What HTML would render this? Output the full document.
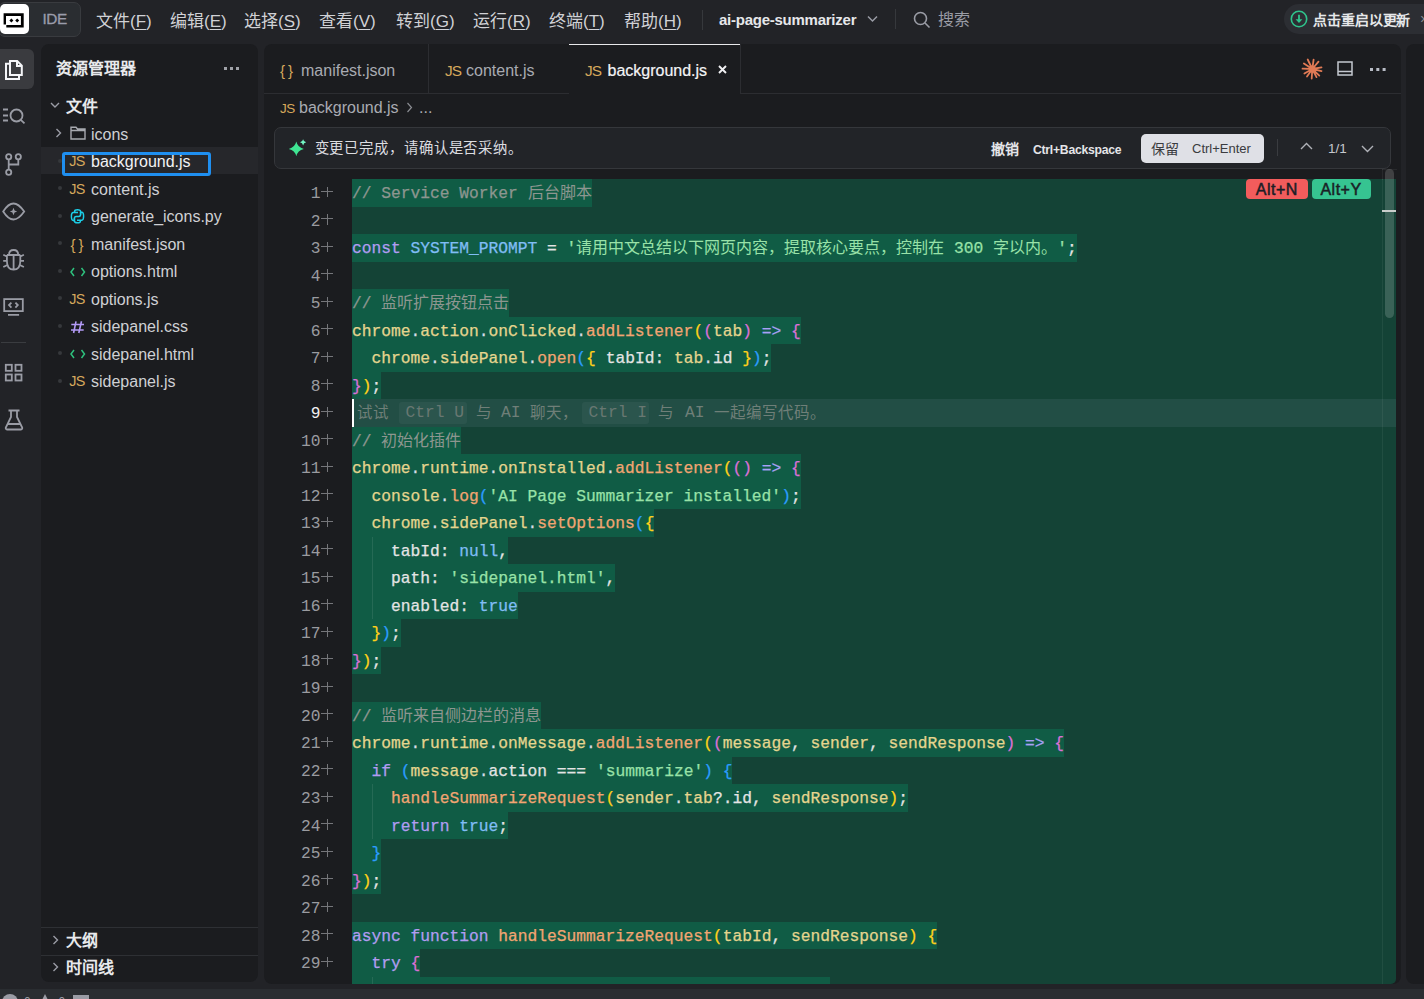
<!DOCTYPE html>
<html lang="zh-CN"><head><meta charset="utf-8">
<style>
*{margin:0;padding:0;box-sizing:border-box}
html,body{width:1424px;height:999px;overflow:hidden;background:#222327;font-family:"Liberation Sans",sans-serif;color:#cfd0d4}
.a{position:absolute}
#title{position:absolute;left:0;top:0;width:1424px;height:44px;background:#222327}
.menu{position:absolute;top:10.6px;font-size:17px;line-height:22px;color:#d0d1d5;white-space:nowrap}
.menu u{text-decoration:underline;text-underline-offset:2px;text-decoration-thickness:1px}
#status{position:absolute;left:0;top:988.5px;width:1424px;height:11px;background:#2a2d31}
#side{position:absolute;left:41px;top:44px;width:217px;height:937.5px;background:#1b1c1f;border-radius:8px;overflow:hidden}
#editor{position:absolute;left:264px;top:44px;width:1137px;height:940px;background:#1b1c1f;border-radius:8px;overflow:hidden}
#right{position:absolute;left:1406px;top:44px;width:40px;height:940px;background:#1b1c1f;border-radius:8px}
.frow{position:absolute;left:0;width:217px;height:27.5px;font-size:16px;line-height:27.5px;color:#cfd0d4;white-space:nowrap}
.frow .dot{position:absolute;left:16.5px;top:11.75px;width:4px;height:4px;border-radius:2px;background:#36383c}
.frow .ic{position:absolute;left:28px;top:1.3px;width:16px;height:27.5px;text-align:center}
.frow .nm{position:absolute;left:50px;top:1.3px}
.js{color:#d6a85c;font-size:14.4px;letter-spacing:-0.6px}
.tab{position:absolute;top:1.5px;height:49px;font-size:16px;line-height:49px;color:#a9abb2;white-space:nowrap}
.ln{position:absolute;left:0;margin-top:1px;width:56.5px;text-align:right;font-family:"Liberation Mono",monospace;font-size:16.25px;line-height:27.5px;color:#9a9ba0}
.ln.cur{color:#f0f0f0}
.plus{position:absolute;left:56.8px;width:12px;height:27.5px}
.plus:before{content:"";position:absolute;left:0;top:11.5px;width:12px;height:1px;background:#75767a}
.plus:after{content:"";position:absolute;left:5.9px;top:7.4px;width:1px;height:10.6px;background:#75767a}
#code{position:absolute;left:88px;top:135.3px;width:1044px;height:804.7px;border-bottom-right-radius:5px;background:#144336;overflow:hidden}
.cl{position:absolute;left:0;height:27.5px;background:#105c45;font-family:"Liberation Mono",monospace;font-size:16.25px;line-height:27.5px;white-space:pre;color:#e6e6e6}
.cl .z{font-size:16px;-webkit-text-stroke:0}
.cl>span{position:relative;top:1px;-webkit-text-stroke:0.25px currentColor}
.c{color:#8d9690}.k{color:#b29cf2}.f{color:#f2a572}.v{color:#e5d58e}.w{color:#e4e4e4}.s{color:#98e2a8}.n{color:#98e2a8}
.p1{color:#ffd11a}.p2{color:#da70d6}.p3{color:#2c9cff}.o{color:#a9a1f5}.g{color:#d9dde6}.b{color:#80bdf5}
.ghost{position:absolute;top:0;font-size:15.5px;line-height:27.5px;color:#6f7f78;white-space:nowrap}
.kb{position:absolute;top:2.4px;height:22px;border-radius:3px;background:rgba(255,255,255,0.045);font-family:"Liberation Mono",monospace;font-size:16.25px;line-height:22px;color:#687872;white-space:pre}
.ico{position:absolute;stroke:#9a9ca5;fill:none;stroke-width:1.8}
</style></head><body>

<div id="title">
  <div class="a" style="left:-2px;top:2px;width:82.5px;height:34.5px;border:1px solid #393b3f;border-radius:7px;background:#2a2d31"></div>
  <div class="a" style="left:0;top:4px;width:29px;height:30px;background:#fff;border-radius:5px"></div>
  <svg class="a" style="left:0;top:0" width="32" height="36" viewBox="0 0 32 36">
    <path d="M3.6 13.2H23.7V27.5H6.3V25.1H20.9V16H6V24.6H3.6Z" fill="#000"/>
    <path d="M11.4 18.4L13.4 20.4L11.4 22.4L9.4 20.4Z M17.2 18.4L19.2 20.4L17.2 22.4L15.2 20.4Z" fill="#000"/>
  </svg>
  <div class="a" style="left:42.5px;top:9px;font-size:15.4px;line-height:20px;color:#9a9cab;letter-spacing:-0.5px;-webkit-text-stroke:0.3px #9a9cab">IDE</div>

  <div class="menu" style="left:96px">文件(<u>F</u>)</div>
  <div class="menu" style="left:170px">编辑(<u>E</u>)</div>
  <div class="menu" style="left:244px">选择(<u>S</u>)</div>
  <div class="menu" style="left:319px">查看(<u>V</u>)</div>
  <div class="menu" style="left:396px">转到(<u>G</u>)</div>
  <div class="menu" style="left:473px">运行(<u>R</u>)</div>
  <div class="menu" style="left:549px">终端(<u>T</u>)</div>
  <div class="menu" style="left:624px">帮助(<u>H</u>)</div>
  <div class="a" style="left:702px;top:10px;width:1px;height:20px;background:#36383c"></div>
  <div class="a" style="left:719px;top:10px;font-size:15px;font-weight:bold;line-height:20px;color:#e6e7ea;letter-spacing:-0.25px">ai-page-summarizer</div>
  <svg class="a" style="left:867px;top:15px" width="11" height="8" viewBox="0 0 11 8"><path d="M1 1.5L5.5 6L10 1.5" stroke="#9a9ca5" stroke-width="1.5" fill="none"/></svg>
  <div class="a" style="left:895px;top:9px;width:1px;height:20px;background:#36383c"></div>
  <svg class="a" style="left:913px;top:11px" width="18" height="18" viewBox="0 0 18 18"><circle cx="7.5" cy="7.5" r="6" stroke="#9a9ca5" stroke-width="1.6" fill="none"/><path d="M12 12L16.5 16.5" stroke="#9a9ca5" stroke-width="1.6"/></svg>
  <div class="a" style="left:938px;top:9px;font-size:16px;line-height:22px;color:#9a9ca5">搜索</div>

  <div class="a" style="left:1284px;top:4px;width:160px;height:30px;border-radius:15px;background:#2c2e33"></div>
  <svg class="a" style="left:1290px;top:10px" width="18" height="18" viewBox="0 0 18 18"><circle cx="9" cy="9" r="7.7" stroke="#2fc48c" stroke-width="1.6" fill="none"/><path d="M9 4.8V10" stroke="#2fc48c" stroke-width="1.8" fill="none"/><path d="M5.6 9.2H12.4L9 12.9Z" fill="#2fc48c"/></svg>
  <div class="a" style="left:1313px;top:9.7px;font-size:14px;font-weight:bold;line-height:20px;color:#e6e8ea;letter-spacing:-0.1px">点击重启以更新</div>
  <div class="a" style="left:1420px;top:9px;font-size:14px;line-height:20px;color:#8a8c92">×</div>
</div>

<!-- activity bar -->
<div class="a" style="left:0;top:49px;width:34px;height:39.5px;background:#3a3b3f;border-radius:0 6px 6px 0"></div>
<svg class="a" style="left:0;top:50px" width="40" height="40" viewBox="0 0 40 40">
  <path d="M10 11H17.2L21.8 15.6V25H10Z M17 11V16H21.8" stroke="#f4f5f8" stroke-width="2" fill="none" stroke-linejoin="miter"/>
  <path d="M10 13.8H6V29H19V25" stroke="#f4f5f8" stroke-width="2" fill="none"/>
</svg>
<svg class="ico" style="left:2px;top:107px" width="24" height="18" viewBox="0 0 24 18">
  <path d="M1 2.5H6M1 8.5H6M1 13.5H6"/><circle cx="14.5" cy="8.5" r="6"/><path d="M18.8 12.8L22.5 16.3"/>
</svg>
<svg class="ico" style="left:4px;top:152px" width="18" height="24" viewBox="0 0 18 24">
  <circle cx="4.7" cy="4.8" r="2.6"/><circle cx="14.3" cy="4.8" r="2.6"/><circle cx="4.7" cy="20.3" r="2.6"/>
  <path d="M4.7 7.4V17.7M14.3 7.4V12.5H4.7"/>
</svg>
<svg class="ico" style="left:2px;top:202px" width="24" height="20" viewBox="0 0 24 20">
  <path d="M1.2 9.5C5 3.5 8 1.5 11.5 1.5S18 3.5 22.2 9.5C18 15.5 15 17.5 11.5 17.5S5 15.5 1.2 9.5Z"/>
  <path d="M11.5 5.8L12.6 8.4L15.2 9.5L12.6 10.6L11.5 13.2L10.4 10.6L7.8 9.5L10.4 8.4Z" fill="#9a9ca5" stroke="none"/>
</svg>
<svg class="ico" style="left:0;top:240px" width="30" height="40" viewBox="0 0 30 40">
  <path d="M9 15Q9 10 13.6 10Q18.2 10 18.2 15M6.9 15H20.3M6.9 15V21Q6.9 29.6 13.6 29.6Q20.3 29.6 20.3 21V15M13.6 15V29.6M6.9 16.5L3.3 14.8M6.9 20.8H3.2M6.9 25.2L3.3 27M20.3 16.5L23.9 14.8M20.3 20.8H24M20.3 25.2L23.9 27"/>
</svg>
<svg class="ico" style="left:0;top:290px" width="30" height="30" viewBox="0 0 30 30">
  <rect x="4.2" y="9.1" width="18.6" height="12"/><path d="M8 24.8H19.1M11.4 12.6L9 15.1L11.4 17.6M15.4 12.6L17.8 15.1L15.4 17.6"/>
</svg>
<div class="a" style="left:1px;top:342px;width:25px;height:1px;background:#3a3c40"></div>
<svg class="ico" style="left:4px;top:363px" width="20" height="20" viewBox="0 0 20 20">
  <rect x="1.8" y="1.8" width="6" height="6"/><rect x="11.5" y="1.8" width="6" height="6"/><rect x="1.8" y="11.5" width="6" height="6"/><rect x="11.5" y="11.5" width="6" height="6"/>
</svg>
<svg class="ico" style="left:4px;top:409px" width="20" height="22" viewBox="0 0 20 22">
  <path d="M4.5 1.5H15.5M7 1.5V8L1.8 18.5C1.5 19.5 2 20.5 3 20.5H17C18 20.5 18.5 19.5 18.2 18.5L13 8V1.5M3.5 15H16.5"/>
</svg>

<!-- status bar -->
<div id="status">
  <div class="a" style="left:2px;top:5px;width:16px;height:16px;border-radius:8px;background:#9a9ca5"></div>
  <div class="a" style="left:24px;top:6.5px;font-size:12px;line-height:14px;color:#9a9ca5">0</div>
  <svg class="a" style="left:40px;top:5px" width="10" height="10" viewBox="0 0 10 10"><path d="M5 0L10 10H0Z" fill="#9a9ca5"/></svg>
  <div class="a" style="left:58.5px;top:6.5px;font-size:12px;line-height:14px;color:#9a9ca5">0</div>
  <div class="a" style="left:73px;top:6px;width:16px;height:10px;background:#9a9ca5"></div>
</div>

<!-- sidebar -->
<div id="side">
  <div class="a" style="left:15px;top:13.2px;font-size:16px;font-weight:bold;line-height:24px;color:#e8e9ec">资源管理器</div>
  <div class="a" style="left:183px;top:22.5px;width:3px;height:3px;background:#a0a2a8;box-shadow:6px 0 #a0a2a8,12px 0 #a0a2a8"></div>
  <svg class="a" style="left:9px;top:58px" width="10" height="7" viewBox="0 0 10 7"><path d="M1 1L5 5L9 1" stroke="#9a9ca5" stroke-width="1.4" fill="none"/></svg>
  <div class="a" style="left:25px;top:51.3px;font-size:16px;font-weight:bold;line-height:24px;color:#e8e9ec">文件</div>

  <div class="frow" style="top:75.25px">
    <svg class="a" style="left:14px;top:9px" width="7" height="10" viewBox="0 0 7 10"><path d="M1.5 1L5.5 5L1.5 9" stroke="#9a9ca5" stroke-width="1.4" fill="none"/></svg>
    <svg class="a" style="left:29px;top:7px" width="16" height="14" viewBox="0 0 16 14"><path d="M1 1.2H6L7.5 3H15V13H1Z M1 4.5H15" stroke="#a8aab0" stroke-width="1.4" fill="none"/></svg>
    <span class="nm">icons</span>
  </div>
  <div class="a" style="left:0;top:103px;width:217px;height:26.5px;background:#26272b"></div>
  <div class="a" style="left:21px;top:108px;width:148.5px;height:23.5px;border:3.5px solid #1f8ff0;border-radius:3px"></div>
  <div class="frow" style="top:102.75px;color:#f2f2f4"><span class="dot"></span><span class="ic js">JS</span><span class="nm">background.js</span></div>
  <div class="frow" style="top:130.25px"><span class="dot"></span><span class="ic js">JS</span><span class="nm">content.js</span></div>
  <div class="frow" style="top:157.75px"><span class="dot"></span>
    <svg class="a" style="left:23px;top:-1px" width="28" height="28" viewBox="0 0 28 28"><g stroke="#1ccde6" stroke-width="1.5" fill="none" stroke-linejoin="round">
      <path d="M14 11.4H10.6V10.4Q10.6 8.8 13.5 8.8Q16.6 8.8 16.6 10.6V13.6Q16.6 15.4 14.8 15.4H12.2Q10.4 15.4 10.4 17.2V19.4H9.2Q7.4 19.4 7.4 15.3Q7.4 11.4 9.2 11.4H10.6"/>
      <path d="M13 19.2H16.4V20.2Q16.4 21.8 13.5 21.8Q10.4 21.8 10.4 20V17.2M16.6 13.6V11.2H17.8Q19.6 11.2 19.6 15.3Q19.6 19.2 17.8 19.2H16.4"/>
    </g></svg>
    <span class="nm">generate_icons.py</span></div>
  <div class="frow" style="top:185.25px"><span class="dot"></span><span class="ic" style="color:#d6a85c;font-size:15px;letter-spacing:3px;left:29.5px">{}</span><span class="nm">manifest.json</span></div>
  <div class="frow" style="top:212.75px"><span class="dot"></span>
    <svg class="a" style="left:29px;top:10px" width="16" height="10" viewBox="0 0 16 10"><path d="M4 1L1 5L4 9M11.5 1L14.5 5L11.5 9" stroke="#2ec27e" stroke-width="1.5" fill="none"/></svg>
    <span class="nm">options.html</span></div>
  <div class="frow" style="top:240.25px"><span class="dot"></span><span class="ic js">JS</span><span class="nm">options.js</span></div>
  <div class="frow" style="top:267.75px"><span class="dot"></span><svg class="a" style="left:21px;top:0.25px" width="30" height="30" viewBox="0 0 30 30"><path d="M9.3 12.5H22M9 18H21.7M14 9.3L11.6 21M19.5 9.3L16.8 21" stroke="#b39af5" stroke-width="1.6" fill="none"/></svg><span class="nm">sidepanel.css</span></div>
  <div class="frow" style="top:295.25px"><span class="dot"></span>
    <svg class="a" style="left:29px;top:10px" width="16" height="10" viewBox="0 0 16 10"><path d="M4 1L1 5L4 9M11.5 1L14.5 5L11.5 9" stroke="#2ec27e" stroke-width="1.5" fill="none"/></svg>
    <span class="nm">sidepanel.html</span></div>
  <div class="frow" style="top:322.75px"><span class="dot"></span><span class="ic js">JS</span><span class="nm">sidepanel.js</span></div>

  <div class="a" style="left:0;top:883px;width:217px;height:1px;background:#2e3034"></div>
  <svg class="a" style="left:10.7px;top:891.2px" width="7" height="10" viewBox="0 0 7 10"><path d="M1.5 1L5.5 5L1.5 9" stroke="#9a9ca5" stroke-width="1.4" fill="none"/></svg>
  <div class="a" style="left:25px;top:885px;font-size:16px;font-weight:bold;line-height:24px;color:#e8e9ec">大纲</div>
  <div class="a" style="left:0;top:910.5px;width:217px;height:1px;background:#2e3034"></div>
  <svg class="a" style="left:10.7px;top:918.2px" width="7" height="10" viewBox="0 0 7 10"><path d="M1.5 1L5.5 5L1.5 9" stroke="#9a9ca5" stroke-width="1.4" fill="none"/></svg>
  <div class="a" style="left:25px;top:912px;font-size:16px;font-weight:bold;line-height:24px;color:#e8e9ec">时间线</div>
</div>

<!-- editor -->
<div id="editor">
  <div class="a" style="left:0;top:49px;width:1137px;height:1px;background:#2c2d31"></div>
  <div class="tab" style="left:0;width:165px"><span class="a" style="left:16px;color:#d6a85c;font-size:15px;letter-spacing:3px">{}</span><span class="a" style="left:37px">manifest.json</span></div>
  <div class="a" style="left:164px;top:0;width:1px;height:49px;background:#2c2d31"></div>
  <div class="tab" style="left:165px;width:140px"><span class="a js" style="left:16px;font-size:15.4px;letter-spacing:-0.9px">JS</span><span class="a" style="left:37px">content.js</span></div>
  <div class="a" style="left:304.5px;top:0;width:1px;height:49px;background:#2c2d31"></div>
  <div class="a" style="left:305px;top:0;width:171px;height:50px;background:#1b1c1f"></div>
  <div class="a" style="left:305px;top:0;width:171px;height:1.3px;background:#e8e8ea"></div>
  <div class="a" style="left:475.5px;top:0;width:1px;height:49px;background:#2c2d31"></div>
  <div class="tab" style="left:305px;width:171px;color:#f4f4f6"><span class="a js" style="left:16px;font-size:15.4px;letter-spacing:-0.9px">JS</span><span class="a" style="left:38.5px;-webkit-text-stroke:0.2px #f4f4f6">background.js</span></div>
  <svg class="a" style="left:454px;top:20.5px" width="9" height="9" viewBox="0 0 9 9"><path d="M1 1L8 8M8 1L1 8" stroke="#f0f0f2" stroke-width="1.9"/></svg>

  <svg class="a" style="left:1034px;top:11px" width="28" height="28" viewBox="0 0 28 28">
    <path d="M14.3 14.0L9.7 4.5M14.3 14.0L15.6 4.6M14.3 14.0L20.5 6.6M14.3 14.0L23.5 12.3M14.3 14.0L23.5 16.1M14.3 14.0L21.3 20.6M14.3 14.0L18.5 22.1M14.3 14.0L13.7 23.5M14.3 14.0L9.0 21.6M14.3 14.0L6.4 18.5M14.3 14.0L4.5 13.7M14.3 14.0L5.9 8.4" stroke="#e07a55" stroke-width="1.8" stroke-linecap="round" fill="none"/>
    <circle cx="14.3" cy="14" r="3.4" fill="#e07a55"/>
  </svg>
  <svg class="a" style="left:1073px;top:17px" width="16" height="15" viewBox="0 0 16 15"><path d="M1 1H15V14H1Z M1 10.5H15" stroke="#c4c8d0" stroke-width="1.5" fill="none"/></svg>
  <div class="a" style="left:1106px;top:23.5px;width:3px;height:3px;background:#b8bcc6;box-shadow:6.3px 0 #b8bcc6,12.6px 0 #b8bcc6"></div>

  <div class="a" style="left:16px;top:55px;font-size:13.5px;line-height:20px;color:#d6a85c;letter-spacing:-0.6px">JS</div>
  <div class="a" style="left:35px;top:54px;font-size:16px;line-height:20px;color:#a9abb2">background.js</div>
  <svg class="a" style="left:142px;top:58px" width="7" height="11" viewBox="0 0 7 11"><path d="M1.5 1L5.5 5.5L1.5 10" stroke="#8a8c92" stroke-width="1.2" fill="none"/></svg>
  <div class="a" style="left:155px;top:54px;font-size:16px;line-height:20px;color:#a9abb2">...</div>

  <div class="a" style="left:10px;top:83px;width:1117px;height:42px;border:1px solid #35373b;border-radius:7px;background:#222428"></div>
  <svg class="a" style="left:20px;top:90px" width="28" height="28" viewBox="0 0 28 28">
    <path d="M12.3 7.6Q13.6 13.4 19.8 14.9Q13.6 16.4 12.3 22.2Q11 16.4 4.8 14.9Q11 13.4 12.3 7.6Z" fill="#3fe593"/>
    <path d="M19.1 5.2Q19.6 7.8 22.2 8.3Q19.6 8.8 19.1 11.4Q18.6 8.8 16 8.3Q18.6 7.8 19.1 5.2Z" fill="#74f7c4"/>
  </svg>
  <div class="a" style="left:50.5px;top:93.5px;font-size:14.4px;line-height:20px;color:#dcdde0;letter-spacing:0.9px">变更已完成，请确认是否采纳。</div>
  <div class="a" style="left:727px;top:95px;font-size:14px;font-weight:bold;line-height:20px;color:#e4e5e8">撤销</div>
  <div class="a" style="left:769px;top:95px;font-size:12.2px;font-weight:bold;line-height:20px;color:#e4e5e8;letter-spacing:-0.25px;position:absolute;top:95.8px">Ctrl+Backspace</div>
  <div class="a" style="left:877px;top:89.5px;width:123px;height:29.5px;background:#dfe0e6;border-radius:5px"></div>
  <div class="a" style="left:887px;top:94.5px;font-size:14px;line-height:20px;color:#3a3b40">保留</div>
  <div class="a" style="left:928px;top:95px;font-size:13px;line-height:20px;color:#3a3b40">Ctrl+Enter</div>
  <div class="a" style="left:1013px;top:95px;width:1px;height:17px;background:#3a3c40"></div>
  <svg class="a" style="left:1036px;top:98px" width="13" height="8" viewBox="0 0 13 8"><path d="M1 7L6.5 1.5L12 7" stroke="#b0b2b8" stroke-width="1.4" fill="none"/></svg>
  <div class="a" style="left:1064px;top:95px;font-size:13.5px;line-height:20px;color:#c6c8ce">1/1</div>
  <svg class="a" style="left:1097px;top:101px" width="13" height="8" viewBox="0 0 13 8"><path d="M1 1L6.5 6.5L12 1" stroke="#b0b2b8" stroke-width="1.4" fill="none"/></svg>

  <!-- gutter -->
  <div class="a" style="left:0;top:-44px;width:1px;height:1px"></div>
  <div id="gutter" class="a" style="left:0;top:-44px">
<div class="ln" style="top:179.30px">1</div><div class="plus" style="top:179.30px"></div>
<div class="ln" style="top:206.80px">2</div><div class="plus" style="top:206.80px"></div>
<div class="ln" style="top:234.30px">3</div><div class="plus" style="top:234.30px"></div>
<div class="ln" style="top:261.80px">4</div><div class="plus" style="top:261.80px"></div>
<div class="ln" style="top:289.30px">5</div><div class="plus" style="top:289.30px"></div>
<div class="ln" style="top:316.80px">6</div><div class="plus" style="top:316.80px"></div>
<div class="ln" style="top:344.30px">7</div><div class="plus" style="top:344.30px"></div>
<div class="ln" style="top:371.80px">8</div><div class="plus" style="top:371.80px"></div>
<div class="ln cur" style="top:399.30px">9</div><div class="plus" style="top:399.30px"></div>
<div class="ln" style="top:426.80px">10</div><div class="plus" style="top:426.80px"></div>
<div class="ln" style="top:454.30px">11</div><div class="plus" style="top:454.30px"></div>
<div class="ln" style="top:481.80px">12</div><div class="plus" style="top:481.80px"></div>
<div class="ln" style="top:509.30px">13</div><div class="plus" style="top:509.30px"></div>
<div class="ln" style="top:536.80px">14</div><div class="plus" style="top:536.80px"></div>
<div class="ln" style="top:564.30px">15</div><div class="plus" style="top:564.30px"></div>
<div class="ln" style="top:591.80px">16</div><div class="plus" style="top:591.80px"></div>
<div class="ln" style="top:619.30px">17</div><div class="plus" style="top:619.30px"></div>
<div class="ln" style="top:646.80px">18</div><div class="plus" style="top:646.80px"></div>
<div class="ln" style="top:674.30px">19</div><div class="plus" style="top:674.30px"></div>
<div class="ln" style="top:701.80px">20</div><div class="plus" style="top:701.80px"></div>
<div class="ln" style="top:729.30px">21</div><div class="plus" style="top:729.30px"></div>
<div class="ln" style="top:756.80px">22</div><div class="plus" style="top:756.80px"></div>
<div class="ln" style="top:784.30px">23</div><div class="plus" style="top:784.30px"></div>
<div class="ln" style="top:811.80px">24</div><div class="plus" style="top:811.80px"></div>
<div class="ln" style="top:839.30px">25</div><div class="plus" style="top:839.30px"></div>
<div class="ln" style="top:866.80px">26</div><div class="plus" style="top:866.80px"></div>
<div class="ln" style="top:894.30px">27</div><div class="plus" style="top:894.30px"></div>
<div class="ln" style="top:921.80px">28</div><div class="plus" style="top:921.80px"></div>
<div class="ln" style="top:949.30px">29</div><div class="plus" style="top:949.30px"></div>
<div class="ln" style="top:976.80px">30</div><div class="plus" style="top:976.80px"></div>
  </div>

  <div id="code">
<div class="cl" style="top:0.00px;width:239.50px"><span class="c">// Service Worker <span class="z">后台脚本</span></span></div>
<div class="cl" style="top:55.00px;width:724.50px"><span class="k">const</span><span class="w"> </span><span class="b">SYSTEM_PROMPT</span><span class="w"> = </span><span class="s">&#x27;<span class="z">请用中文总结以下网页内容，提取核心要点，控制在</span> </span><span class="n">300</span><span class="s"> <span class="z">字以内。</span>&#x27;</span><span class="w">;</span></div>
<div class="cl" style="top:110.00px;width:157.25px"><span class="c">// <span class="z">监听扩展按钮点击</span></span></div>
<div class="cl" style="top:137.50px;width:448.50px"><span class="v">chrome</span><span class="g">.</span><span class="v">action</span><span class="g">.</span><span class="v">onClicked</span><span class="g">.</span><span class="f">addListener</span><span class="p1">(</span><span class="p2">(</span><span class="v">tab</span><span class="p2">)</span><span class="w"> </span><span class="o">=&gt;</span><span class="w"> </span><span class="p2">{</span></div>
<div class="cl" style="top:165.00px;width:419.25px"><span class="w">  </span><span class="v">chrome</span><span class="g">.</span><span class="v">sidePanel</span><span class="g">.</span><span class="f">open</span><span class="p3">(</span><span class="p1">{</span><span class="w"> tabId: </span><span class="v">tab</span><span class="g">.</span><span class="w">id </span><span class="p1">}</span><span class="p3">)</span><span class="w">;</span></div>
<div class="cl" style="top:192.50px;width:29.25px"><span class="p2">}</span><span class="p1">)</span><span class="w">;</span></div>
<div class="cl" style="top:247.50px;width:109.25px"><span class="c">// <span class="z">初始化插件</span></span></div>
<div class="cl" style="top:275.00px;width:448.50px"><span class="v">chrome</span><span class="g">.</span><span class="v">runtime</span><span class="g">.</span><span class="v">onInstalled</span><span class="g">.</span><span class="f">addListener</span><span class="p1">(</span><span class="p2">()</span><span class="w"> </span><span class="o">=&gt;</span><span class="w"> </span><span class="p2">{</span></div>
<div class="cl" style="top:302.50px;width:448.50px"><span class="w">  </span><span class="v">console</span><span class="g">.</span><span class="f">log</span><span class="p3">(</span><span class="s">&#x27;AI Page Summarizer installed&#x27;</span><span class="p3">)</span><span class="w">;</span></div>
<div class="cl" style="top:330.00px;width:302.25px"><span class="w">  </span><span class="v">chrome</span><span class="g">.</span><span class="v">sidePanel</span><span class="g">.</span><span class="f">setOptions</span><span class="p3">(</span><span class="p1">{</span></div>
<div class="cl" style="top:357.50px;width:156.00px"><span class="w">    tabId: </span><span class="b">null</span><span class="w">,</span></div>
<div class="cl" style="top:385.00px;width:263.25px"><span class="w">    path: </span><span class="s">&#x27;sidepanel.html&#x27;</span><span class="w">,</span></div>
<div class="cl" style="top:412.50px;width:165.75px"><span class="w">    enabled: </span><span class="b">true</span></div>
<div class="cl" style="top:440.00px;width:48.75px"><span class="w">  </span><span class="p1">}</span><span class="p3">)</span><span class="w">;</span></div>
<div class="cl" style="top:467.50px;width:29.25px"><span class="p2">}</span><span class="p1">)</span><span class="w">;</span></div>
<div class="cl" style="top:522.50px;width:189.25px"><span class="c">// <span class="z">监听来自侧边栏的消息</span></span></div>
<div class="cl" style="top:550.00px;width:711.75px"><span class="v">chrome</span><span class="g">.</span><span class="v">runtime</span><span class="g">.</span><span class="v">onMessage</span><span class="g">.</span><span class="f">addListener</span><span class="p1">(</span><span class="p2">(</span><span class="v">message</span><span class="w">, </span><span class="v">sender</span><span class="w">, </span><span class="v">sendResponse</span><span class="p2">)</span><span class="w"> </span><span class="o">=&gt;</span><span class="w"> </span><span class="p2">{</span></div>
<div class="cl" style="top:577.50px;width:380.25px"><span class="w">  </span><span class="k">if</span><span class="w"> </span><span class="p3">(</span><span class="v">message</span><span class="g">.</span><span class="w">action === </span><span class="s">&#x27;summarize&#x27;</span><span class="p3">)</span><span class="w"> </span><span class="p3">{</span></div>
<div class="cl" style="top:605.00px;width:555.75px"><span class="w">    </span><span class="f">handleSummarizeRequest</span><span class="p1">(</span><span class="v">sender</span><span class="g">.</span><span class="v">tab</span><span class="w">?.id, </span><span class="v">sendResponse</span><span class="p1">)</span><span class="w">;</span></div>
<div class="cl" style="top:632.50px;width:156.00px"><span class="w">    </span><span class="k">return</span><span class="w"> </span><span class="b">true</span><span class="w">;</span></div>
<div class="cl" style="top:660.00px;width:29.25px"><span class="w">  </span><span class="p3">}</span></div>
<div class="cl" style="top:687.50px;width:29.25px"><span class="p2">}</span><span class="p1">)</span><span class="w">;</span></div>
<div class="cl" style="top:742.50px;width:585.00px"><span class="k">async</span><span class="w"> </span><span class="k">function</span><span class="w"> </span><span class="f">handleSummarizeRequest</span><span class="p1">(</span><span class="v">tabId</span><span class="w">, </span><span class="v">sendResponse</span><span class="p1">)</span><span class="w"> </span><span class="p1">{</span></div>
<div class="cl" style="top:770.00px;width:68.25px"><span class="w">  </span><span class="k">try</span><span class="w"> </span><span class="p2">{</span></div>
<div class="cl" style="top:797.50px;width:477.75px"><span class="w">    </span><span class="k">const</span><span class="w"> </span><span class="b">tabInfo</span><span class="w"> = </span><span class="k">await</span><span class="w"> </span><span class="v">chrome</span><span class="g">.</span><span class="v">tabs</span><span class="g">.</span><span class="f">get</span><span class="p3">(</span><span class="v">tabId</span><span class="p3">)</span><span class="w">;</span></div>
    <!-- ghost line 9 -->
    <div class="a" style="left:0;top:220px;width:1044px;height:27.5px;background:#224e45">
      <div class="a" style="left:0;top:-0.4px;width:2.2px;height:28.2px;background:#ffffff"></div>
      <div class="ghost" style="left:5px">试试</div>
      <div class="kb" style="left:47px;width:67.5px;padding-left:6.5px">Ctrl U</div>
      <div class="ghost" style="left:124px">与</div>
            <div class="ghost" style="left:149px;font-family:'Liberation Mono',monospace;font-size:16.25px">AI</div>
      <div class="ghost" style="left:178px">聊天，</div>
      <div class="kb" style="left:230px;width:66.5px;padding-left:6.5px">Ctrl I</div>
      <div class="ghost" style="left:306px">与</div>
      <div class="ghost" style="left:333px;font-family:'Liberation Mono',monospace;font-size:16.25px">AI</div>
      <div class="ghost" style="left:362px">一起编写代码。</div>
    </div>
    <!-- indent guides -->
    <div class="a" style="left:20px;top:357.5px;width:1px;height:82.5px;background:rgba(255,255,255,0.09)"></div>
    <div class="a" style="left:20px;top:605px;width:1px;height:55px;background:rgba(255,255,255,0.09)"></div>
    <div class="a" style="left:20px;top:797.5px;width:1px;height:27.5px;background:rgba(255,255,255,0.09)"></div>
    <!-- badges -->
    <div class="a" style="left:894px;top:0;width:61.5px;height:20px;border-radius:4px;background:#f25c5c;font-size:16px;line-height:22px;color:#1c1e26;text-align:center;letter-spacing:0.5px;-webkit-text-stroke:0.5px #1c1e26">Alt+N</div>
    <div class="a" style="left:959.5px;top:0;width:59px;height:20px;border-radius:4px;background:#36c491;font-size:16px;line-height:22px;color:#1a1f26;text-align:center;letter-spacing:0.5px;-webkit-text-stroke:0.5px #1a1f26">Alt+Y</div>
    <!-- scrollbar track -->
    <div class="a" style="left:1029.5px;top:0;width:1px;height:810px;background:rgba(255,255,255,0.06)"></div>

  </div>
  <div class="a" style="left:1117.5px;top:124.5px;width:15px;height:1px;background:rgba(255,255,255,0.06)"></div>
  <div class="a" style="left:1117.5px;top:124.5px;width:1px;height:11px;background:rgba(255,255,255,0.06)"></div>
  <div class="a" style="left:1120.6px;top:124.8px;width:9.2px;height:149.2px;border-radius:4.6px;background:rgba(255,255,255,0.165)"></div>
  <div class="a" style="left:1118px;top:166px;width:14px;height:2px;background:#c9cecb"></div>
</div>

<div id="right"></div>
</body></html>
